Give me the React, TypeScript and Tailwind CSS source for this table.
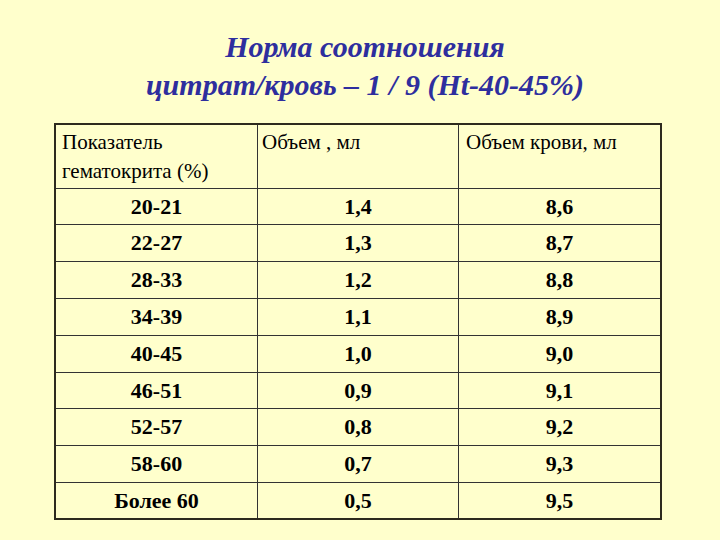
import React from "react";

const rows: [string, string, string, number][] = [
  ["20-21", "1,4", "8,6", 35],
  ["22-27", "1,3", "8,7", 36],
  ["28-33", "1,2", "8,8", 36],
  ["34-39", "1,1", "8,9", 36],
  ["40-45", "1,0", "9,0", 36],
  ["46-51", "0,9", "9,1", 35],
  ["52-57", "0,8", "9,2", 36],
  ["58-60", "0,7", "9,3", 36],
  ["Более 60", "0,5", "9,5", 35],
];

export default function App() {
  return (
    <div className="w-[720px] h-[540px] overflow-hidden bg-[#FFFFCC] font-['Liberation_Serif','Times_New_Roman','Tinos','Noto_Serif','DejaVu_Serif','FreeSerif','Nimbus_Roman',serif] text-black">
      <div className="pt-[28px] pl-[10px] text-center text-[30px] leading-[38px] font-bold italic text-[#2E2E9E]">
        <div>Норма соотношения</div>
        <div>цитрат/кровь – 1 / 9 (Ht-40-45%)</div>
      </div>
      <div className="ml-[54px] mt-[19px] w-[608px] border-2 border-[#2d2a1e]">
        <div className="flex h-[63px] text-[21px] leading-[29px]">
          <div className="w-[201px] pl-[6px] pt-[3px]">
            Показатель
            <br />
            гематокрита (%)
          </div>
          <div className="w-[201px] border-l border-[#333] pl-[4px] pt-[3px]">Объем , мл</div>
          <div className="flex-1 border-l border-[#333] pl-[7px] pt-[3px]">Объем крови, мл</div>
        </div>
        {rows.map(([a, b, c, h], i) => (
          <div
            key={i}
            className="flex border-t border-[#333] text-[22px] font-bold leading-none"
            style={{ height: h + 1 }}
          >
            <div className="w-[201px] flex items-center justify-center">{a}</div>
            <div className="w-[201px] border-l border-[#333] flex items-center justify-center">{b}</div>
            <div className="flex-1 border-l border-[#333] flex items-center justify-center">{c}</div>
          </div>
        ))}
      </div>
    </div>
  );
}
